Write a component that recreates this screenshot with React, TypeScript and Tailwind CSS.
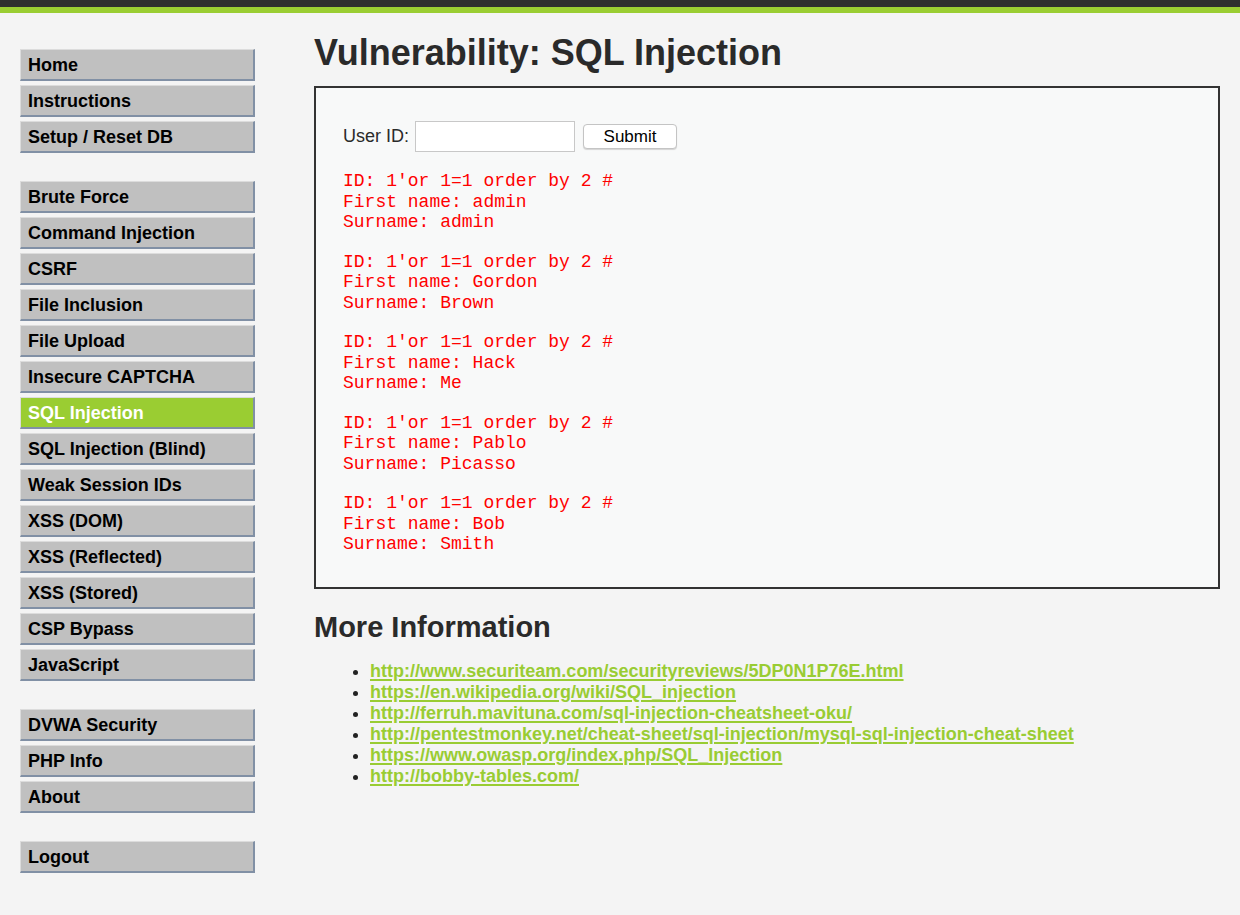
import React from 'react';

const menuGroups: string[][] = [
  ['Home', 'Instructions', 'Setup / Reset DB'],
  [
    'Brute Force',
    'Command Injection',
    'CSRF',
    'File Inclusion',
    'File Upload',
    'Insecure CAPTCHA',
    'SQL Injection',
    'SQL Injection (Blind)',
    'Weak Session IDs',
    'XSS (DOM)',
    'XSS (Reflected)',
    'XSS (Stored)',
    'CSP Bypass',
    'JavaScript',
  ],
  ['DVWA Security', 'PHP Info', 'About'],
  ['Logout'],
];

const results = [
  ['admin', 'admin'],
  ['Gordon', 'Brown'],
  ['Hack', 'Me'],
  ['Pablo', 'Picasso'],
  ['Bob', 'Smith'],
];

const links = [
  'http://www.securiteam.com/securityreviews/5DP0N1P76E.html',
  'https://en.wikipedia.org/wiki/SQL_injection',
  'http://ferruh.mavituna.com/sql-injection-cheatsheet-oku/',
  'http://pentestmonkey.net/cheat-sheet/sql-injection/mysql-sql-injection-cheat-sheet',
  'https://www.owasp.org/index.php/SQL_Injection',
  'http://bobby-tables.com/',
];

const MenuItem: React.FC<{ label: string }> = ({ label }) => {
  const active = label === 'SQL Injection';
  return (
    <li
      className={`h-[32px] flex items-center pl-[7px] pt-[1px] border-t border-l border-t-[#dcdcdc] border-l-[#dcdcdc] border-r-2 border-b-2 border-r-[#8190a5] border-b-[#8190a5] text-[18px] font-bold ${
        active ? 'bg-[#9acd32] text-white' : 'bg-[#c0c0c0] text-black'
      }`}
    >
      {label}
    </li>
  );
};

export default function App() {
  return (
    <div
      className="min-h-[915px] bg-[#f4f4f4] text-[#2a2a2a]"
      style={{ fontFamily: '"Liberation Sans", Arial, sans-serif' }}
    >
      <div className="h-[7px] bg-[#2e2e2e]" />
      <div className="h-[6px] bg-[#9acd32]" />

      <div className="flex pl-[20px] pr-[20px] pt-[36px]">
        <nav className="w-[235px] shrink-0 flex flex-col gap-[28px]">
          {menuGroups.map((group, i) => (
            <ul key={i} className="flex flex-col gap-[4px]">
              {group.map((label) => (
                <MenuItem key={label} label={label} />
              ))}
            </ul>
          ))}
        </nav>

        <main className="flex-1 ml-[59px]">
          <h1 className="text-[36px] font-bold leading-[43px] -mt-[18px] mb-[12px]">
            Vulnerability: SQL Injection
          </h1>

          <div className="border-2 border-[#333] bg-[#f8f9f9] pl-[27px] pt-[33px] pb-[13px]">
            <form className="flex items-center text-[18px]" onSubmit={(e) => e.preventDefault()}>
              <label className="mr-[6px]">User ID:</label>
              <input
                type="text"
                className="w-[160px] h-[31px] bg-white border border-[#c8c8c8] outline-none"
              />
              <button
                type="submit"
                className="ml-[8px] w-[94px] h-[25px] bg-white border border-[#c4c4c4] rounded-[4px] shadow-[0_1px_1px_rgba(0,0,0,0.15)] text-[17px] text-black leading-none"
              >
                Submit
              </button>
            </form>

            <div className="mt-[19px]">
              {results.map(([first, last], i) => (
                <pre
                  key={i}
                  className="text-[18px] leading-[20.5px] text-[#ff0000] mb-[19px]"
                  style={{ fontFamily: '"Liberation Mono", "Courier New", monospace' }}
                >
                  {`ID: 1'or 1=1 order by 2 #\nFirst name: ${first}\nSurname: ${last}`}
                </pre>
              ))}
            </div>
          </div>

          <h2 className="text-[29px] font-bold leading-[34px] mt-[21px]">More Information</h2>

          <ul className="list-disc pl-[56px] mt-[17px] marker:text-[#222]">
            {links.map((href) => (
              <li key={href} className="text-[18px] leading-[21px]">
                <a href={href} className="font-bold text-[#99cc33] underline decoration-[2px] underline-offset-[2px]">
                  {href}
                </a>
              </li>
            ))}
          </ul>
        </main>
      </div>
    </div>
  );
}
